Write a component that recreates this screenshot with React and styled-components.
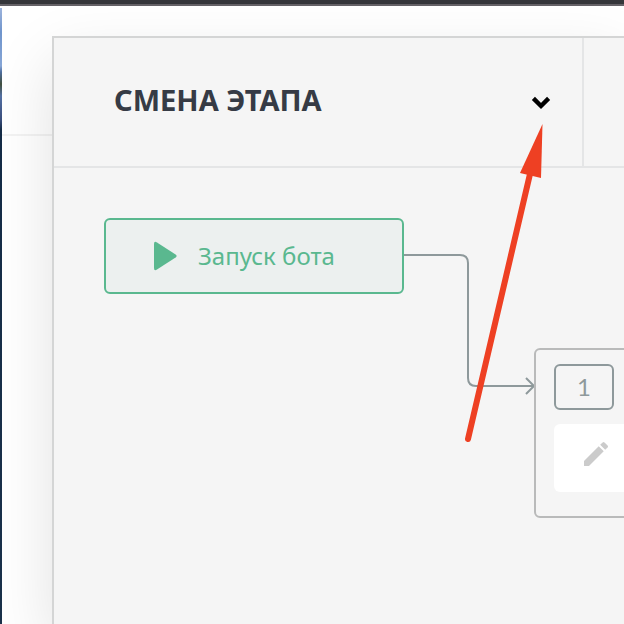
import React, { useState } from 'react';
import styled, { createGlobalStyle } from 'styled-components';

const GlobalStyle = createGlobalStyle`
  * {
    box-sizing: border-box;
  }

  body {
    margin: 0;
    background-color: #fff;
    font-family: 'Noto Sans', 'Open Sans', sans-serif;
  }
`;

const PageContainer = styled.div`
  display: flex;
  flex-direction: column;
  min-height: 100vh;
  position: relative;
  overflow: hidden;
`;

const TopBar = styled.div`
  height: 6px;
  flex-shrink: 0;
  background-color: #35363a;
  border-bottom: 2px solid #656267;
`;

const Content = styled.div`
  display: flex;
  flex: 1;
`;

const PhotoStrip = styled.div`
  width: 2px;
  margin-top: 2px;
  flex-shrink: 0;
  background: linear-gradient(
    #9db4dc 0,
    #6f94cc 24px,
    #86a5d6 58px,
    #4f6f9f 64px,
    #42503f 76px,
    #5571a4 88px,
    #3a4e7c 112px,
    #152c47 122px,
    #1b324b 100%
  );
`;

const Gutter = styled.div`
  width: 50px;
  flex-shrink: 0;
`;

const GutterHead = styled.div`
  height: 130px;
  border-bottom: 2px solid #f3f3f3;
`;

const Panel = styled.main`
  display: flex;
  flex-direction: column;
  flex: 1;
  min-width: 0;
  margin-top: 30px;
  background-color: #f5f5f5;
  border-top: 2px solid #d4d5d5;
  border-left: 2px solid #d4d5d5;
  box-shadow: 0 24px 60px rgba(0, 0, 0, 0.12);
`;

const PanelHeader = styled.header`
  display: flex;
  height: 130px;
  border-bottom: 2px solid #e4e5e6;
`;

const StageCell = styled.div`
  display: flex;
  align-items: center;
  justify-content: space-between;
  width: 530px;
  flex-shrink: 0;
  padding: 0 30px 0 60px;
  border-right: 2px solid #e4e5e6;
`;

const StageTitle = styled.h1`
  margin: 0;
  padding-bottom: 4px;
  color: #363b45;
  font-size: 29px;
  line-height: 40px;
  font-weight: 700;
  text-transform: uppercase;
`;

const ToggleButton = styled.button`
  display: flex;
  padding: 0;
  border: none;
  background: none;
  color: #000;
  cursor: pointer;
`;

const Canvas = styled.section`
  position: relative;
  flex: 1;
  min-height: 400px;
  overflow: hidden;
`;

const StartNode = styled.button`
  position: absolute;
  top: 50px;
  left: 50px;
  display: flex;
  align-items: center;
  gap: 20px;
  width: 300px;
  height: 76px;
  padding: 0 48px;
  border: 2px solid #5ab88f;
  border-radius: 6px;
  background-color: #ecf0ef;
  color: #5ab88f;
  font-family: inherit;
  font-size: 24px;
  line-height: 32px;
  white-space: nowrap;
  cursor: pointer;
`;

const Connector = styled.svg`
  position: absolute;
  top: 80px;
  left: 350px;
`;

const StepNode = styled.article`
  position: absolute;
  top: 180px;
  left: 480px;
  display: flex;
  flex-direction: column;
  gap: 14px;
  width: 300px;
  padding: 14px 18px 24px;
  border: 2px solid #b9baba;
  border-radius: 6px;
`;

const StepNumber = styled.span`
  display: flex;
  align-items: center;
  justify-content: center;
  width: 60px;
  height: 46px;
  border: 2px solid #8e999b;
  border-radius: 6px;
  color: #8e999b;
  font-family: Lato, sans-serif;
  font-size: 24px;
  line-height: 32px;
`;

const StepAction = styled.div`
  display: flex;
  height: 68px;
  padding: 14px 26px;
  border-radius: 6px;
  background-color: #fff;
`;

const EditButton = styled.button`
  display: flex;
  align-self: flex-start;
  padding: 0;
  border: none;
  background: none;
  color: #cbcbcb;
  cursor: pointer;
`;

const Pointer = styled.svg`
  position: absolute;
  top: 120px;
  left: 460px;
  pointer-events: none;
`;

const App = () => {
  const [open, setOpen] = useState(false);

  return (
    <PageContainer>
      <GlobalStyle />
      <TopBar />
      <Content>
        <PhotoStrip />
        <Gutter>
          <GutterHead />
        </Gutter>
        <Panel>
          <PanelHeader>
            <StageCell>
              <StageTitle>Смена этапа</StageTitle>
              <ToggleButton
                aria-label="Выбрать этап"
                aria-expanded={open}
                onClick={() => setOpen(!open)}
              >
                <svg width="22" height="20" viewBox="0 0 22 20" fill="none">
                  <path d="M3.4 6.4L11 14L18.6 6.4" stroke="currentColor" strokeWidth="4.4" />
                </svg>
              </ToggleButton>
            </StageCell>
          </PanelHeader>
          <Canvas>
            <StartNode>
              <svg width="24" height="30" viewBox="0 0 24 30" fill="currentColor">
                <path d="M0 3Q0 -0.4 3 1.4L21.6 13.4Q23.6 15 21.6 16.6L3 28.6Q0 30.4 0 27Z" />
              </svg>
              Запуск бота
            </StartNode>
            <Connector width="132" height="150" viewBox="0 0 132 150" fill="none" stroke="#8e999b" strokeWidth="2">
              <path d="M0 7H56Q64 7 64 15V130Q64 138 72 138H130" />
              <path d="M122 130L130 138L122 146" />
            </Connector>
            <StepNode>
              <StepNumber>1</StepNumber>
              <StepAction>
                <EditButton aria-label="Редактировать шаг">
                  <svg width="32" height="32" viewBox="0 0 24 24" fill="currentColor">
                    <path d="M3 17.25V21h3.75L17.81 9.94l-3.75-3.75L3 17.25zM20.71 7.04a1 1 0 0 0 0-1.41l-2.34-2.34a1 1 0 0 0-1.41 0l-1.83 1.83 3.75 3.75 1.83-1.83z" />
                  </svg>
                </EditButton>
              </StepAction>
            </StepNode>
          </Canvas>
        </Panel>
      </Content>
      <Pointer width="90" height="330" viewBox="0 0 90 330">
        <path d="M8 319L70 54" stroke="#ee4023" strokeWidth="6" strokeLinecap="round" />
        <path d="M82.5 4L60 53L81 58Z" fill="#ee4023" />
      </Pointer>
    </PageContainer>
  );
};

export default App;
